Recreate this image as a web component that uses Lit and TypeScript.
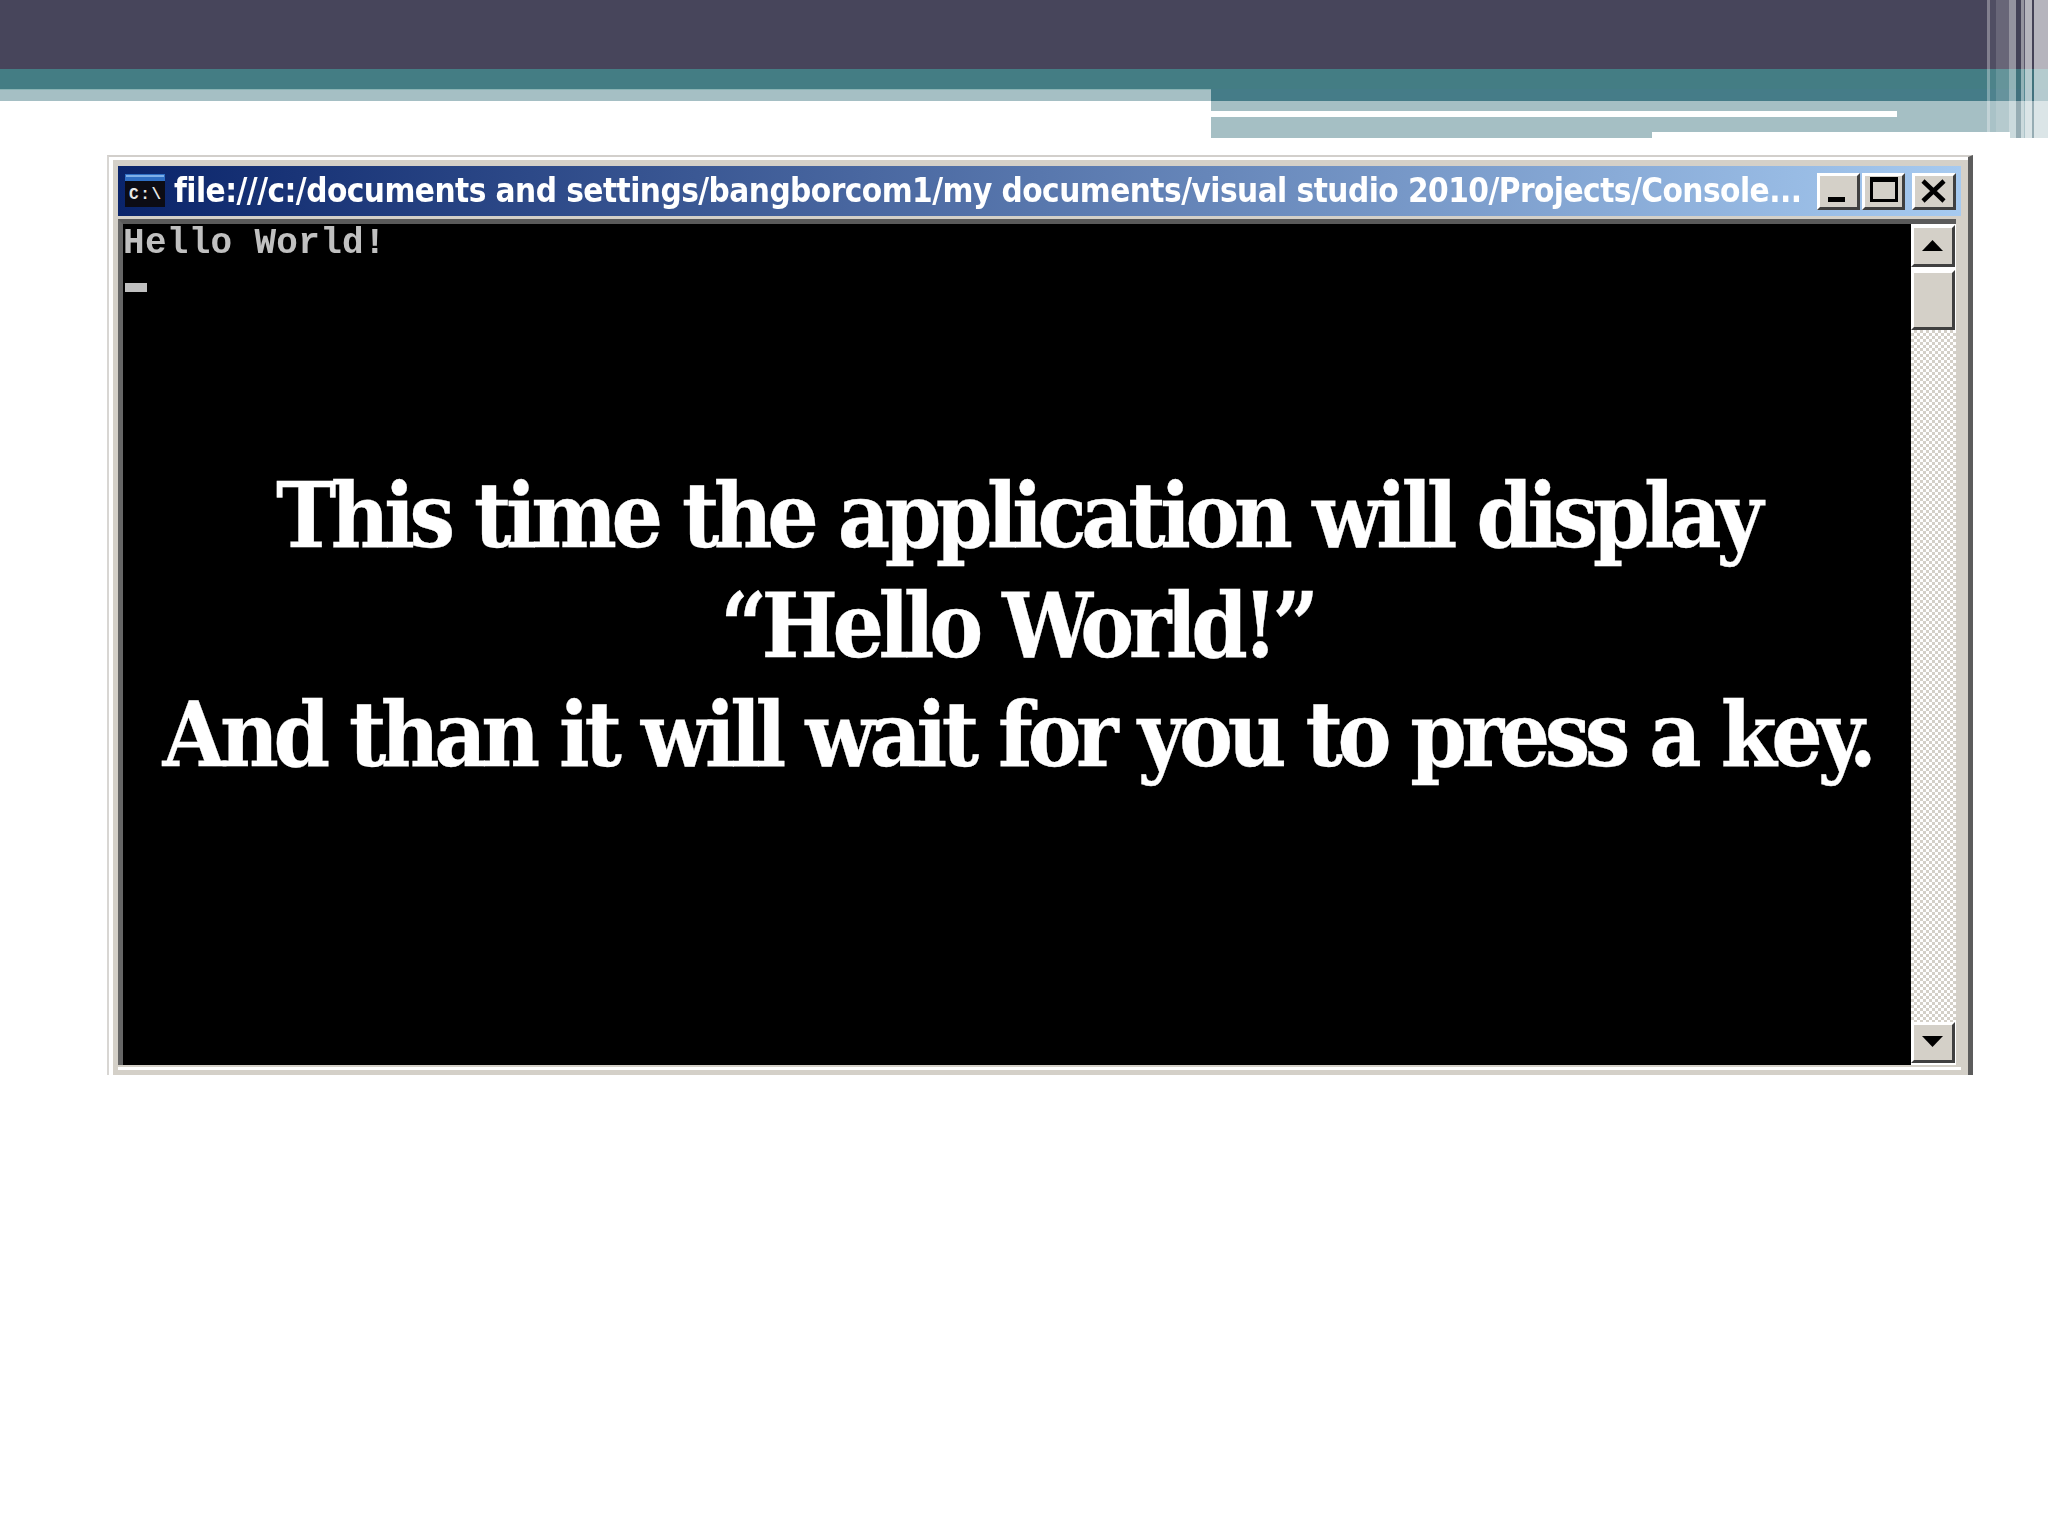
import { LitElement, html, css } from "lit";
import { customElement } from "lit/decorators.js";

const STRIPES = [
  ["s-gap", 27], ["s-a35", 3], ["s-a05", 6], ["s-a18", 13], ["s-a40", 7], ["s-a00", 5],
  ["s-a40", 3], ["s-a10", 1], ["s-a60", 7], ["s-a00", 2], ["s-a60", 14],
] as const;

@customElement("app-root")
export class AppRoot extends LitElement {
  static styles = css`
    :host { display: block; width: 2048px; height: 1536px; background: #fff; overflow: hidden; }
    .header { position: relative; height: 138px; display: flex; flex-direction: column; }
    .band-dark { height: 69px; background: #47455b; }
    .band-teal { height: 20px; background: #447d84; }
    .row { display: flex; }
    .left { width: 1211px; flex: none; }
    .rest { flex: 1; }
    .r1 { height: 12px; }
    .r2 { height: 10px; }
    .r3 { height: 6px; }
    .r4 { height: 15px; }
    .r5 { height: 6px; }
    .light { background: #a5bfc4; }
    .teal { background: #457c88; }
    .white { background: #fff; }
    .w-686 { width: 686px; flex: none; }
    .w-441 { width: 441px; flex: none; }
    .w-358 { width: 358px; flex: none; }
    .l-top { border-top: 1px solid #8ab3b4; box-sizing: border-box; }
    .stripes { position: absolute; inset: 0 0 0 auto; width: 88px; display: flex; }
    .s-gap { background: transparent; }
    .s-a00 { background: rgba(40, 40, 60, 0.12); }
    .s-a05 { background: rgba(255, 255, 255, 0.05); }
    .s-a10 { background: rgba(255, 255, 255, 0.1); }
    .s-a18 { background: rgba(255, 255, 255, 0.18); }
    .s-a35 { background: rgba(255, 255, 255, 0.32); }
    .s-a40 { background: rgba(255, 255, 255, 0.42); }
    .s-a60 { background: rgba(255, 255, 255, 0.6); }

    .win {
      box-sizing: border-box; width: 1866px; height: 920px; margin: 17px 0 0 107px;
      border-top: 2px solid #d2cfcb; border-left: 2px solid #d8d6d3; border-right: 5px solid #5c5c5c;
      display: flex;
    }
    .inner {
      flex: 1; min-width: 0; box-sizing: border-box; background: #d4d0c8;
      border-top: 3px solid #fff; border-left: 4px solid #fff;
      padding: 6px 7px 5px 5px; display: flex; flex-direction: column;
    }
    .title {
      height: 50px; flex: none; display: flex; align-items: flex-start;
      background: linear-gradient(90deg, #0a246a, #a6caf0);
    }
    .icon { flex: none; width: 40px; height: 33px; margin: 8px 9px 0 7px; display: block; }
    .title-text {
      flex: 1; min-width: 0; white-space: nowrap; color: #fff;
      font: 700 33px/50px "DejaVu Sans Condensed", "DejaVu Sans", sans-serif; letter-spacing: -0.54px; filter: blur(0.5px);
    }
    .btn {
      flex: none; box-sizing: border-box; width: 43px; height: 37px; background: #d4d0c8;
      border-style: solid; border-width: 3px;
      border-color: #fff #404040 #404040 #fff; display: flex;
    }
    .btn svg { display: block; width: 100%; height: 100%; }
    .title .btn { margin-top: 7px; }
    .min { margin-left: 14px; }
    .max { margin-left: 2px; }
    .close { margin: 7px 5px 0 7px; width: 44px; }
    .frame {
      height: 846px; flex: none; margin: 3px 5px 0 0; box-sizing: border-box;
      border-top: 5px solid #5a5a5a; border-left: 5px solid #666; display: flex;
    }
    .console { position: relative; flex: 1; min-width: 0; background: #000; }
    .hello {
      color: #c0c0c0; font: 700 36px/36px "Liberation Mono", monospace; padding: 2px 0 0 0; height: 36px;
      letter-spacing: 0.3px; white-space: pre; filter: blur(0.4px);
    }
    .cursor { width: 22px; height: 9px; background: #c0c0c0; margin: 21px 0 0 2px; }
    .overlay {
      position: absolute; left: 0; right: 0; top: 237px; text-align: center; color: #fff;
      font: 700 90px/109.5px "DejaVu Serif Condensed", "DejaVu Serif", serif;
      letter-spacing: -5.47px; word-spacing: 1.7px; white-space: nowrap;
      -webkit-text-stroke: 0.3px #fff;
    }
    .scroll { flex: none; width: 45px; display: flex; flex-direction: column; background: #fff; padding: 1px 0 2px; box-sizing: border-box; }
    .scroll .btn { width: 44px; }
    .up { height: 42px; }
    .thumb { height: 60px !important; margin-top: 3px; }
    .track {
      flex: 1; min-height: 0;
      background: repeating-conic-gradient(#d4d0c8 0 25%, #fff 0 50%) 0 0 / 6px 6px;
    }
    .down { height: 41px !important; }
    .bottom { height: 3px; background: #fff; margin-top: 2px; flex: none; }
  `;

  render() {
    return html`
      <div class="header">
        <div class="band-dark"></div>
        <div class="band-teal"></div>
        <div class="row r1"><div class="left light l-top"></div><div class="rest teal"></div></div>
        <div class="row r2"><div class="left white"></div><div class="rest light"></div></div>
        <div class="row r3"><div class="left white"></div><div class="w-686 white"></div><div class="rest light"></div></div>
        <div class="row r4"><div class="left white"></div><div class="rest light"></div></div>
        <div class="row r5"><div class="left white"></div><div class="w-441 light"></div><div class="w-358 white"></div><div class="rest light"></div></div>
        <div class="stripes">
          ${STRIPES.map(([c, w]) => html`<div class=${c} style="width:${w}px"></div>`)}
        </div>
      </div>
      <div class="win">
        <div class="inner">
          <div class="title">
            <svg class="icon" viewBox="0 0 40 33">
              <rect width="40" height="33" fill="#0c0c14"/>
              <rect width="40" height="7" fill="#2f6fc4"/>
              <rect x="1" y="1" width="38" height="2" fill="#7fb0e8"/>
              <text x="4" y="25" font-family="Liberation Mono, monospace" font-weight="700" font-size="16" fill="#e8e8e8" textLength="32">C:\\</text>
            </svg>
            <div class="title-text">file:///c:/documents and settings/bangborcom1/my documents/visual studio 2010/Projects/Console...</div>
            <div class="btn min"><svg viewBox="0 0 37 31"><rect x="8" y="21" width="17" height="5"/></svg></div>
            <div class="btn max"><svg viewBox="0 0 37 31"><path d="M6.5 2.5h25v22h-25z" fill="none" stroke="#000" stroke-width="3"/><rect x="5" y="1" width="28" height="5"/></svg></div>
            <div class="btn close"><svg viewBox="0 0 38 31"><path d="M8 5l21 20M29 5L8 25" fill="none" stroke="#000" stroke-width="4.5"/></svg></div>
          </div>
          <div class="frame">
            <div class="console">
              <div class="hello">Hello World!</div>
              <div class="cursor"></div>
              <div class="overlay">This time the application will display<br>“Hello World!”<br>And than it will wait for you to press a key.</div>
            </div>
            <div class="scroll">
              <div class="btn up"><svg viewBox="0 0 38 36"><path d="M8 23L18.5 12 29 23z"/></svg></div>
              <div class="btn thumb"></div>
              <div class="track"></div>
              <div class="btn down"><svg viewBox="0 0 38 35"><path d="M8 11L18.5 22 29 11z"/></svg></div>
            </div>
          </div>
          <div class="bottom"></div>
        </div>
      </div>
    `;
  }
}
